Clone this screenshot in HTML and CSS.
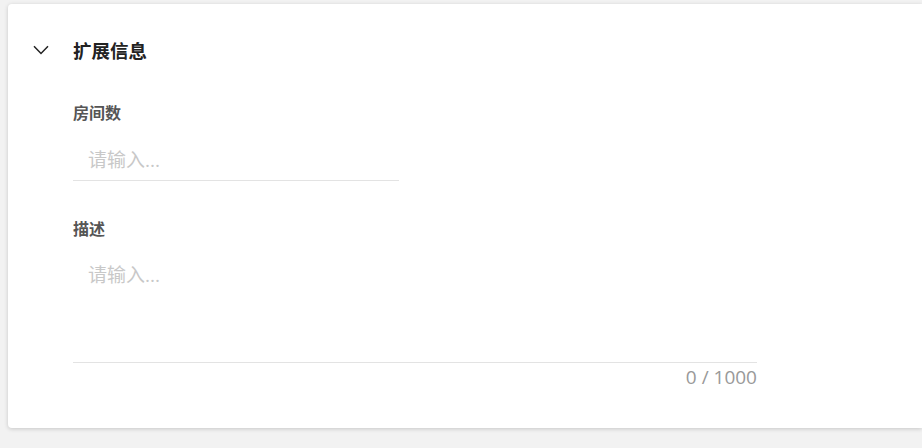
FILE: index.html
```html
<!DOCTYPE html>
<html lang="zh-CN">
<head>
<meta charset="utf-8">
<link rel="stylesheet" href="styles.css">
</head>
<body>
<div class="card">
  <div class="header">
    <svg class="chevron" width="16" height="10" viewBox="0 0 16 10"><path d="M1 1.2 L8 8.4 L15 1.2" fill="none" stroke="#222" stroke-width="1.5"/></svg>
    <span class="title">扩展信息</span>
  </div>
  <div class="fields">
    <div class="field">
      <label class="label">房间数</label>
      <input class="input" type="text" placeholder="请输入...">
    </div>
    <div class="field field-desc">
      <label class="label">描述</label>
      <textarea class="textarea" placeholder="请输入..."></textarea>
      <div class="counter">0 / 1000</div>
    </div>
  </div>
</div>
</body>
</html>
```
FILE: styles.css
```css
html, body {
  margin: 0;
  padding: 0;
  background: #f2f2f2;
  overflow: hidden;
  height: 448px;
}
body {
  font-family: "Open Sans", "Noto Sans CJK SC", sans-serif;
}
.card {
  margin: 4px 0 0 8px;
  width: 914px;
  height: 424px;
  box-sizing: border-box;
  background: #fff;
  border-radius: 4px 0 0 4px;
  box-shadow: 0 1px 4px rgba(0, 0, 0, 0.18);
  padding: 26px 0 0 25px;
}
.header {
  height: 40px;
  display: flex;
  align-items: center;
}
.chevron {
  display: block;
  margin-right: 24px;
}
.title {
  font-size: 18.5px;
  font-weight: 700;
  color: #222;
}
.fields {
  padding-left: 40px;
  margin-top: 31px;
  display: flex;
  flex-direction: column;
}
.field {
  display: flex;
  flex-direction: column;
  width: 326px;
}
.field-desc {
  width: 684px;
  margin-top: 36px;
}
.label {
  font-size: 16px;
  font-weight: 600;
  line-height: 24px;
  color: #555;
}
.input, .textarea {
  font-family: inherit;
  font-size: 19px;
  color: #333;
  border: none;
  border-bottom: 1px solid #e3e3e3;
  outline: none;
  padding: 0 0 0 15px;
  margin: 0;
  background: transparent;
  box-sizing: border-box;
}
.input {
  margin-top: 15px;
  height: 41px;
  line-height: 40px;
}
.textarea {
  margin-top: 15px;
  height: 107px;
  padding-top: 7px;
  line-height: 24px;
  resize: none;
}
.input::placeholder, .textarea::placeholder {
  color: #c8c8c8;
}
.counter {
  text-align: right;
  font-size: 19px;
  line-height: 28px;
  color: #999;
}
```
